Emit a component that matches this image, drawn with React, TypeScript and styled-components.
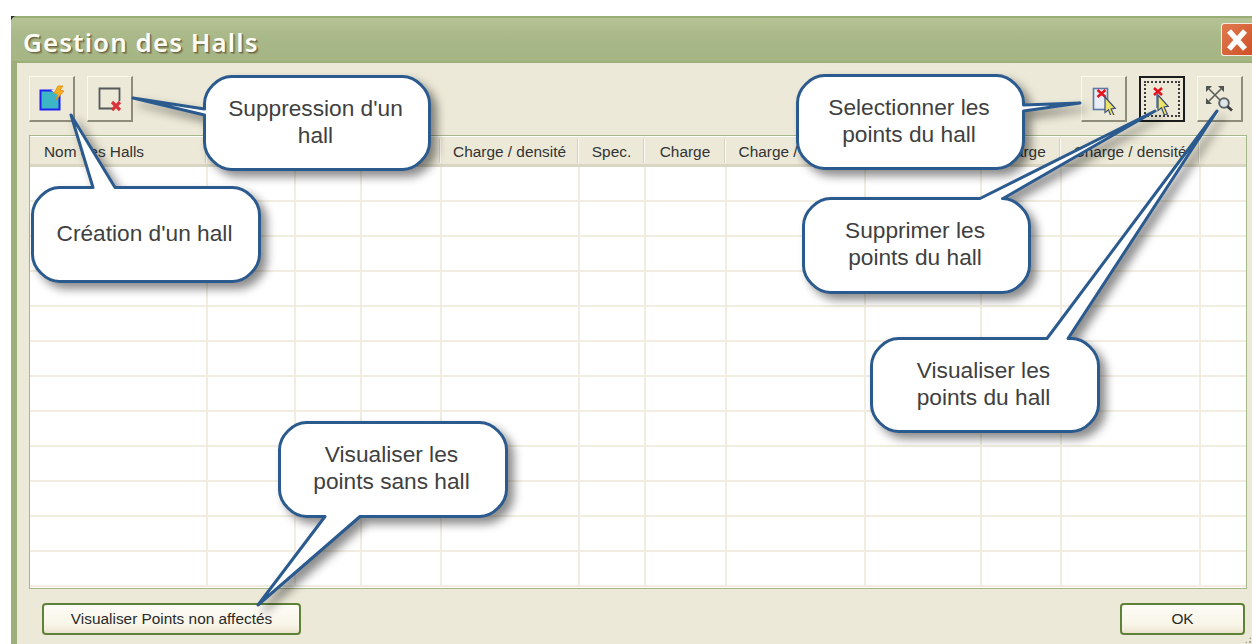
import React from 'react';
import styled, { createGlobalStyle } from 'styled-components';

const GlobalStyle = createGlobalStyle`
  html, body {
    margin: 0;
    padding: 0;
    background: #fff;
    overflow: hidden;
  }
`;

interface Column {
  width: number;
  label?: string;
  align?: 'left' | 'center';
}

const columns: Column[] = [
  { width: 178, label: 'Nom des Halls', align: 'left' },
  { width: 88 },
  { width: 66 },
  { width: 80 },
  { width: 138, label: 'Charge / densité' },
  { width: 66, label: 'Spec.' },
  { width: 81, label: 'Charge' },
  { width: 139, label: 'Charge / densité' },
  { width: 116 },
  { width: 80, label: 'Charge' },
  { width: 139, label: 'Charge / densité' },
];

const rows = Array.from({ length: 12 }, (_, i) => i);

interface Point {
  x: number;
  y: number;
}

interface Tail {
  edge: 'top' | 'right' | 'bottom' | 'left';
  from: number;
  to: number;
  tip: Point;
}

// Rounded balloon outline with the pointer spliced into one of its edges.
// The tail's from/to run along the edge, in box coordinates.
function balloonPath(w: number, h: number, r: number, tail: Tail): string {
  const i = 1.5;
  const l = i;
  const t = i;
  const e = w - i;
  const b = h - i;
  const tip = `L${tail.tip.x} ${tail.tip.y}`;
  return [
    `M${l + r} ${t}`,
    tail.edge === 'top' ? `L${tail.from} ${t} ${tip} L${tail.to} ${t}` : '',
    `L${e - r} ${t} C${e - r / 2} ${t} ${e} ${t + r / 2} ${e} ${t + r}`,
    tail.edge === 'right' ? `L${e} ${tail.from} ${tip} L${e} ${tail.to}` : '',
    `L${e} ${b - r} C${e} ${b - r / 2} ${e - r / 2} ${b} ${e - r} ${b}`,
    tail.edge === 'bottom' ? `L${tail.to} ${b} ${tip} L${tail.from} ${b}` : '',
    `L${l + r} ${b} C${l + r / 2} ${b} ${l} ${b - r / 2} ${l} ${b - r}`,
    tail.edge === 'left' ? `L${l} ${tail.to} ${tip} L${l} ${tail.from}` : '',
    `L${l} ${t + r} C${l} ${t + r / 2} ${l + r / 2} ${t} ${l + r} ${t} Z`,
  ].join(' ');
}

const Callout: React.FC<{
  left: number;
  top: number;
  width: number;
  height: number;
  tail: Tail;
  children: React.ReactNode;
}> = ({ left, top, width, height, tail, children }) => (
  <Balloon $left={left} $top={top} $width={width} $height={height}>
    <BalloonShape width={width} height={height}>
      <path d={balloonPath(width, height, 27, tail)} />
    </BalloonShape>
    <BalloonText>{children}</BalloonText>
  </Balloon>
);

const NewHallIcon = () => (
  <svg width="32" height="32" viewBox="0 0 32 32">
    <rect x="4.5" y="7.5" width="19" height="19" fill="#3cb5c6" stroke="#2020f0" strokeWidth="2" />
    <path d="M15 7l8-2v8z" fill="#f4f2e6" />
    <path d="M22 3h5l-3 4 4 1-8 9 2-6-4-1z" fill="#f5b021" stroke="#e08a10" strokeWidth=".8" />
  </svg>
);

const DeleteHallIcon = () => (
  <svg width="32" height="32" viewBox="0 0 32 32">
    <path d="M18 25.5H5.5v-20h20V18" fill="none" stroke="#55585c" strokeWidth="1.8" />
    <path d="M18 19l8 8M26 19l-8 8" stroke="#d8343a" strokeWidth="3.2" />
  </svg>
);

const Pointer: React.FC<{ x: number; y: number }> = ({ x, y }) => (
  <path
    transform={`translate(${x} ${y}) scale(1.2)`}
    d="M0 0l8.5 9.5-3.4.4 2.7 6-2.4 1-2.5-6.2L0 13z"
    fill="#ece36a"
    stroke="#3f4f70"
    strokeWidth="1"
  />
);

const SelectPointsIcon = () => (
  <svg width="32" height="32" viewBox="0 0 32 32">
    <rect x="5.5" y="5.5" width="14" height="21" fill="#e9eef6" stroke="#5b7ba6" strokeWidth="1.6" />
    <path d="M9.5 7l8 7M17.5 7l-8 7" stroke="#e4131d" strokeWidth="2.6" />
    <Pointer x={17} y={14} />
  </svg>
);

const RemovePointsIcon = () => (
  <svg width="32" height="32" viewBox="0 0 32 32">
    <path d="M8 5l8 7M16 5l-8 7" stroke="#e4131d" strokeWidth="2.6" />
    <path d="M11 11v14" stroke="#4c6a9c" strokeWidth="1.4" />
    <Pointer x={12} y={12} />
  </svg>
);

const ShowPointsIcon = () => (
  <svg width="32" height="32" viewBox="0 0 32 32">
    <g stroke="#5a5f5a" strokeWidth="1.6" fill="none">
      <path d="M5 6l12 12M17 6L5 18" />
    </g>
    <g fill="#4e534e">
      <path d="M2 3h6l-6 6zM20 3h-6l6 6zM2 21h6l-6-6zM20 21h-6l6-6z" />
    </g>
    <circle cx="20" cy="20" r="4.8" fill="#dfe6ea" stroke="#5f6468" strokeWidth="2" />
    <path d="M23.5 23.5l4.5 4" stroke="#3e4144" strokeWidth="2.8" />
  </svg>
);

export default function App() {
  return (
    <Page>
      <GlobalStyle />
      <Dialog>
        <TitleBar>
          <Title>Gestion des Halls</Title>
          <CloseButton aria-label="Fermer">
            <svg width="30" height="30" viewBox="0 0 30 30">
              <path d="M7 6l16 18M23 6L7 24" stroke="#fff" strokeWidth="5.5" />
            </svg>
          </CloseButton>
        </TitleBar>
        <Body>
          <Toolbar>
            <ToolGroup>
              <ToolButton><NewHallIcon /></ToolButton>
              <ToolButton><DeleteHallIcon /></ToolButton>
            </ToolGroup>
            <ToolGroup>
              <ToolButton><SelectPointsIcon /></ToolButton>
              <ToolButton $active><FocusRing /><RemovePointsIcon /></ToolButton>
              <ToolButton><ShowPointsIcon /></ToolButton>
            </ToolGroup>
          </Toolbar>
          <Grid>
            <HeaderRow>
              {columns.map((column, index) => (
                <HeaderCell key={index} $width={column.width} $align={column.align ?? 'center'}>
                  {column.label}
                </HeaderCell>
              ))}
            </HeaderRow>
            {rows.map(row => (
              <Row key={row}>
                {columns.map((column, index) => (
                  <Cell key={index} $width={column.width} />
                ))}
              </Row>
            ))}
          </Grid>
          <Footer>
            <FooterButton $width={259}>Visualiser Points non affectés</FooterButton>
            <FooterButton $width={125}>OK</FooterButton>
          </Footer>
          <Grip />
        </Body>
      </Dialog>

      <Callout left={203} top={75} width={228} height={96} tail={{ edge: 'left', from: 34, to: 40, tip: { x: -70, y: 23 } }}>
        Suppression d'un<br />hall
      </Callout>
      <Callout left={31} top={186} width={230} height={97} tail={{ edge: 'top', from: 62, to: 84, tip: { x: 40, y: -71 } }}>
        Création d'un hall
      </Callout>
      <Callout left={796} top={74} width={229} height={96} tail={{ edge: 'right', from: 31, to: 37, tip: { x: 284, y: 29 } }}>
        Selectionner les<br />points du hall
      </Callout>
      <Callout left={802} top={197} width={229} height={97} tail={{ edge: 'top', from: 178, to: 201, tip: { x: 353, y: -86 } }}>
        Supprimer les<br />points du hall
      </Callout>
      <Callout left={870} top={337} width={230} height={96} tail={{ edge: 'top', from: 177, to: 198, tip: { x: 347, y: -226 } }}>
        Visualiser les<br />points du hall
      </Callout>
      <Callout left={278} top={421} width={230} height={97} tail={{ edge: 'bottom', from: 47, to: 82, tip: { x: -20, y: 184 } }}>
        Visualiser les<br />points sans hall
      </Callout>
    </Page>
  );
}

const Page = styled.div`
  position: relative;
  width: 1252px;
  height: 644px;
  padding: 16px 0 0 11px;
  box-sizing: border-box;
  overflow: hidden;
  font-family: "Liberation Sans", Arial, sans-serif;

  /* desktop showing through behind the rounded window corner */
  &::before {
    content: '';
    position: absolute;
    left: 11px;
    top: 16px;
    width: 6px;
    height: 6px;
    background: #2a2d33;
  }
`;

const Dialog = styled.div`
  position: relative;
  width: 1241px;
  height: 628px;
  display: flex;
  flex-direction: column;
  background: #9db07a;
  border-top-left-radius: 6px;
  overflow: hidden;
`;

const TitleBar = styled.div`
  height: 47px;
  display: flex;
  align-items: center;
  justify-content: space-between;
  box-sizing: border-box;
  padding-left: 12px;
  border-top: 2px solid #9aad76;
  border-bottom: 2px solid #9dae78;
  background: linear-gradient(#b6c396, #a9b888 45%, #a6b584);
`;

const Title = styled.div`
  font-family: "Noto Sans", "Open Sans", sans-serif;
  font-size: 26px;
  font-weight: 600;
  letter-spacing: 1.05px;
  color: #fdfdf6;
  text-shadow: 1px 1px 0 #6e6a48, 2px 2px 1px #8b8a60;
  margin-top: 4px;
`;

const CloseButton = styled.div`
  width: 31px;
  height: 33px;
  display: flex;
  align-items: center;
  justify-content: center;
  background: linear-gradient(135deg, #e07a4f, #cf5127);
  border: 1px solid #f4ece0;
  border-right: none;
  border-radius: 3px 0 0 3px;
  box-sizing: border-box;
`;

const Body = styled.div`
  position: relative;
  flex: 1;
  margin-left: 6px;
  padding: 13px 5px 0 12px;
  background: #ece9d8;
  display: flex;
  flex-direction: column;
`;

const Toolbar = styled.div`
  display: flex;
  justify-content: space-between;
  padding-right: 4px;
  height: 46px;
`;

const ToolGroup = styled.div`
  display: flex;
  gap: 12px;
`;

const ToolButton = styled.div<{ $active?: boolean }>`
  position: relative;
  width: 46px;
  height: 46px;
  box-sizing: border-box;
  display: flex;
  align-items: center;
  justify-content: center;
  background: #ece9d8;
  border-style: solid;
  border-width: ${p => (p.$active ? '2px' : '1px 2px 2px 1px')};
  border-color: ${p => (p.$active ? '#1c1c1c' : '#faf9f2 #8f8c7b #8f8c7b #faf9f2')};
`;

const FocusRing = styled.span`
  position: absolute;
  inset: 3px;
  border: 2px dotted #3c3c3c;
`;

const Grid = styled.div`
  margin-top: 13px;
  height: 454px;
  box-sizing: border-box;
  border: 1px solid #a7b78c;
  background: #fff;
  overflow: hidden;
`;

const HeaderRow = styled.div`
  display: flex;
  height: 31px;
  box-sizing: border-box;
  margin-left: -1px;
  background: #ece9d8;
  border-top: 1px solid #fff;
  border-bottom: 3px solid #d9d6c3;
`;

const HeaderCell = styled.div<{ $width: number; $align: 'left' | 'center' }>`
  flex: none;
  width: ${p => p.$width}px;
  box-sizing: border-box;
  display: flex;
  align-items: center;
  justify-content: ${p => (p.$align === 'left' ? 'flex-start' : 'center')};
  padding: 2px 0 0 ${p => (p.$align === 'left' ? '15px' : '0')};
  margin: 2px 0 1px;
  font-size: 15.4px;
  color: #333;
  white-space: nowrap;
  border-right: 1px solid #fbfaf4;
  box-shadow: inset -1px 0 0 #d4d1bf;
`;

const Row = styled.div`
  display: flex;
  height: 35px;
  box-sizing: border-box;
  border-bottom: 2px solid #f1eee1;
`;

const Cell = styled.div<{ $width: number }>`
  flex: none;
  width: ${p => p.$width}px;
  box-sizing: border-box;
  border-right: 2px solid #f1eee1;
`;

const Footer = styled.div`
  display: flex;
  justify-content: space-between;
  margin-top: 14px;
  padding: 0 2px 0 13px;
`;

const FooterButton = styled.div<{ $width: number }>`
  width: ${p => p.$width}px;
  height: 32px;
  box-sizing: border-box;
  display: flex;
  align-items: center;
  justify-content: center;
  font-size: 15.4px;
  color: #2a2a2a;
  border: 2px solid #5f8238;
  border-radius: 4px;
  background: linear-gradient(#fdfcf6, #f8f5e8 70%, #ece4cf);
`;

const Grip = styled.div`
  position: absolute;
  right: 0;
  bottom: 0;
  width: 8px;
  height: 8px;
  background-image: radial-gradient(circle, #a8a594 1px, transparent 1.4px);
  background-size: 4px 4px;
  clip-path: polygon(100% 0, 100% 100%, 0 100%);
`;

const Balloon = styled.div<{ $left: number; $top: number; $width: number; $height: number }>`
  position: absolute;
  left: ${p => p.$left}px;
  top: ${p => p.$top}px;
  width: ${p => p.$width}px;
  height: ${p => p.$height}px;
  display: flex;
  align-items: center;
  justify-content: center;
`;

const BalloonShape = styled.svg`
  position: absolute;
  left: 0;
  top: 0;
  overflow: visible;
  filter: drop-shadow(6px 6px 5px rgba(0, 0, 0, 0.45));

  path {
    fill: #fff;
    stroke: #2b5a8f;
    stroke-width: 3;
    stroke-linejoin: round;
  }
`;

const BalloonText = styled.div`
  position: relative;
  font-size: 22.7px;
  line-height: 27px;
  color: #404040;
  text-align: center;
  margin: -3px 3px 0 0;
`;
